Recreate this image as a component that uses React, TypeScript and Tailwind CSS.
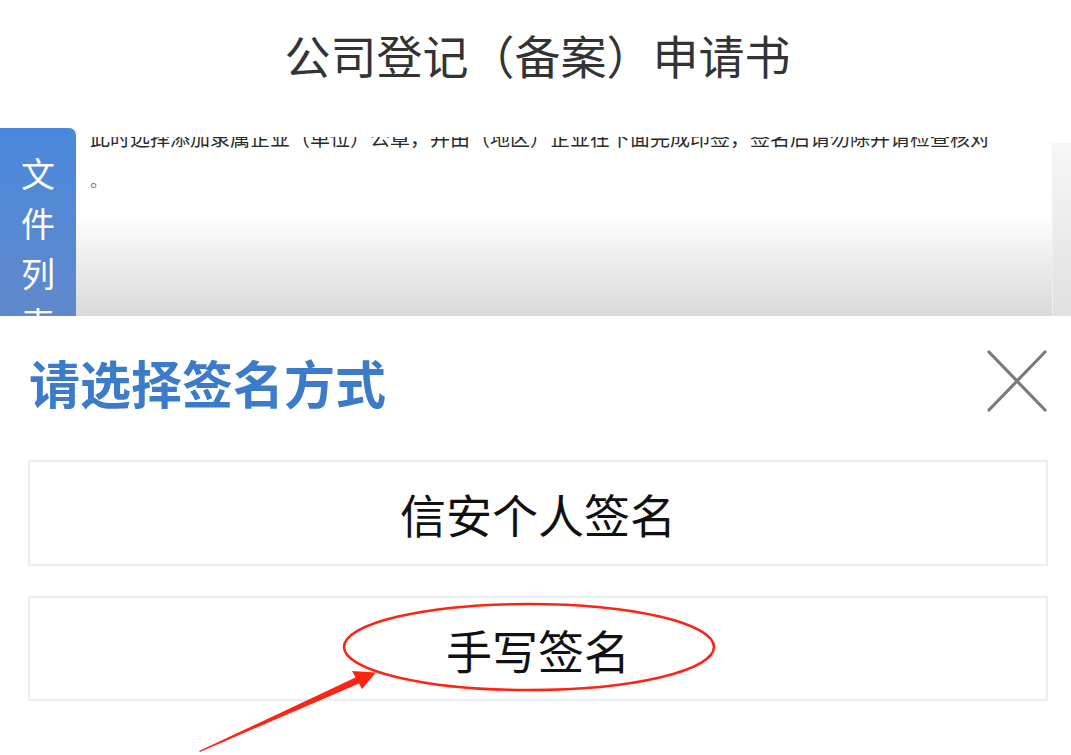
import React from "react";

const font = { fontFamily: '"Noto Sans CJK SC", "Noto Sans", sans-serif' };

export default function App() {
  return (
    <div className="relative w-[1071px] h-[755px] overflow-hidden bg-white" style={font}>
      {/* header */}
      <div className="h-[128px] flex items-start justify-center pt-[22px]">
        <h1 className="text-[46px] leading-[64px] font-normal text-[#333333] pl-[4px]">
          公司登记（备案）申请书
        </h1>
      </div>

      {/* document area */}
      <div className="h-[188px] flex">
        <div className="w-[76px] shrink-0 rounded-tr-[7px] bg-linear-to-b from-[#4a88dc] to-[#6089cc] flex flex-col items-center pt-[20px] overflow-hidden">
          {["文", "件", "列", "表"].map((c) => (
            <span key={c} className="text-white text-[34px] leading-[50px]">
              {c}
            </span>
          ))}
        </div>
        <div className="flex-1 flex bg-linear-to-b from-white from-45% to-[#d9d9d9]">
          <div className="flex-1 pl-[14px] pt-[9px]">
            <div className="h-[22px] overflow-hidden">
              <p className="mt-[-13px] text-[20px] leading-[28px] text-[#2a2a2a] whitespace-nowrap">
                此时选择添加隶属企业（单位）公章，并由（地区）企业在下面完成印签，签名后请勿除并请检查核对
              </p>
            </div>
            <p className="mt-[8px] text-[18px] leading-[24px] text-[#777]">。</p>
          </div>
          <div className="w-[19px] mt-[15px] bg-linear-to-b from-[#f7f7f7] to-[#e0e0e0] border-l border-[#efefef]" />
        </div>
      </div>

      {/* panel */}
      <div className="bg-white pl-[28px] pr-[23px] pt-[34px]">
        <div className="flex items-center justify-between h-[64px]">
          <h2 className="text-[51px] leading-[64px] font-bold text-[#3b7bc9] ml-[1px]">请选择签名方式</h2>
          <svg width="64" height="64" viewBox="0 0 64 64" className="mr-[-1px] mt-[-2px]">
            <path d="M4 3 L60 61 M60 3 L4 61" stroke="#7a7a7a" strokeWidth="3.2" strokeLinecap="round" fill="none" />
          </svg>
        </div>
        <div className="mt-[46px] flex flex-col gap-[30px]">
          <button className="h-[106px] w-full border-2 border-[#e6eef6] bg-white flex items-center justify-center text-[46px] leading-none text-[#111]">
            信安个人签名
          </button>
          <button className="h-[105px] w-full border-2 border-[#e6eef6] bg-white flex items-center justify-center text-[46px] leading-none text-[#111]">
            手写签名
          </button>
        </div>
      </div>

      {/* annotation */}
      <svg className="absolute inset-0 pointer-events-none" width="1071" height="755" viewBox="0 0 1071 755">
        <ellipse cx="529" cy="647" rx="185" ry="43" fill="none" stroke="#ff2314" strokeWidth="2.6" />
        <polygon
          points="199,751 355.5,677.5 352,671 376,672.5 362,689 359,683.5 200,752"
          fill="#ff2314"
        />
      </svg>
    </div>
  );
}
